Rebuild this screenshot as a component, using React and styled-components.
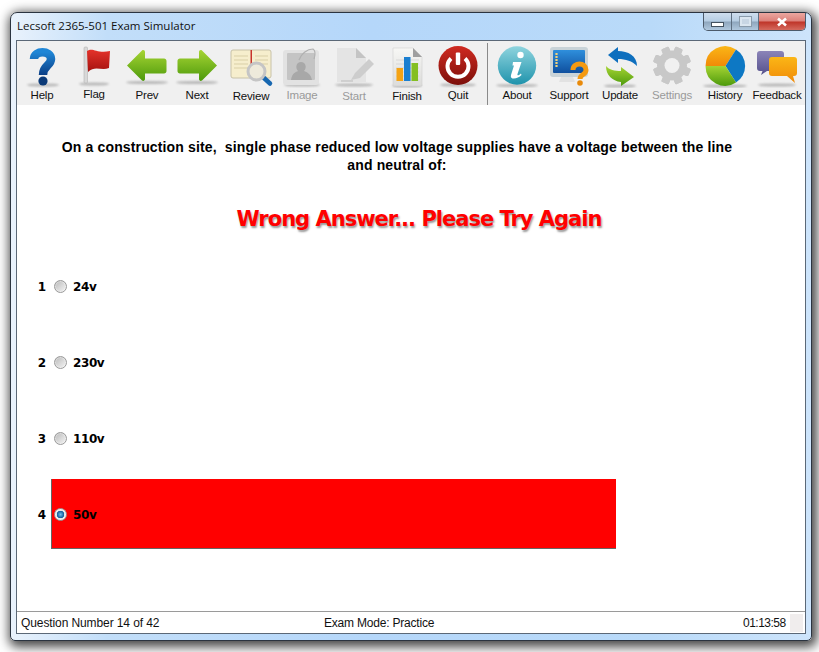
import React from 'react'
import styled, { createGlobalStyle } from 'styled-components'

const Global = createGlobalStyle`
  html, body { margin: 0; padding: 0; background: #fff; }
  body { width: 819px; height: 652px; overflow: hidden; }
`

const UI = `"Liberation Sans", Arial, sans-serif`

function Shadow({ cx = 25, cy = 41, rx = 17 }) {
  return <ellipse cx={cx} cy={cy} rx={rx} ry={1.6} fill="#8a8a8a" opacity="0.55" filter="url(#soft)" />
}

function Defs() {
  return (
    <HiddenSvg>
      <defs>
        <filter id="soft" x="-30%" y="-200%" width="160%" height="500%"><feGaussianBlur stdDeviation="0.9" /></filter>
        <linearGradient id="blue" x1="0" y1="0" x2="0" y2="1"><stop offset="0" stopColor="#1f86d6" /><stop offset="1" stopColor="#0b3f86" /></linearGradient>
        <linearGradient id="green" x1="0" y1="0" x2="0" y2="1"><stop offset="0" stopColor="#a6d433" /><stop offset="1" stopColor="#4d9a0c" /></linearGradient>
        <linearGradient id="red" x1="0" y1="0" x2="0" y2="1"><stop offset="0" stopColor="#e4322a" /><stop offset="1" stopColor="#a5120f" /></linearGradient>
        <linearGradient id="darkred" x1="0" y1="0" x2="0" y2="1"><stop offset="0" stopColor="#cf2a20" /><stop offset="1" stopColor="#7c0f0a" /></linearGradient>
        <linearGradient id="teal" x1="0" y1="0" x2="0" y2="1"><stop offset="0" stopColor="#8fd4de" /><stop offset="1" stopColor="#1f93ac" /></linearGradient>
        <linearGradient id="screen" x1="0" y1="0" x2="0" y2="1"><stop offset="0" stopColor="#2f8fdc" /><stop offset="1" stopColor="#0f4f9e" /></linearGradient>
        <linearGradient id="orange" x1="0" y1="0" x2="0" y2="1"><stop offset="0" stopColor="#fbb616" /><stop offset="1" stopColor="#f08a08" /></linearGradient>
        <linearGradient id="purple" x1="0" y1="0" x2="0" y2="1"><stop offset="0" stopColor="#8b84b8" /><stop offset="1" stopColor="#54508c" /></linearGradient>
        <linearGradient id="page" x1="0" y1="0" x2="0" y2="1"><stop offset="0" stopColor="#f7f7f5" /><stop offset="1" stopColor="#dcdcda" /></linearGradient>
      </defs>
    </HiddenSvg>
  )
}

const icons = {
  help: (
    <>
      <Shadow cx={26} rx={16} />
      <path d="M17 15C17 6 34 6 34 15C34 22 26 21 26 31" fill="none" stroke="url(#blue)" strokeWidth="8.5" strokeLinecap="butt" />
      <circle cx="26" cy="37" r="4.6" fill="#0b3a78" />
    </>
  ),
  flag: (
    <>
      <Shadow cx={25} rx={15} cy={40} />
      <rect x="15" y="3" width="3.5" height="36" rx="1" fill="#d8d8d8" stroke="#aaa" strokeWidth="0.5" />
      <path d="M18 7C24 3 28 10 41 7L40 24C32 27 26 21 19 28Z" fill="url(#red)" />
    </>
  ),
  prev: (
    <>
      <Shadow cy={38.5} rx={21} />
      <path d="M5 21.5L20 6.5C21.5 5.5 23 6.5 23 8V14.5H42C43.5 14.5 44.5 15.5 44.5 17V27C44.5 28.5 43.5 29.5 42 29.5H23V35C23 36.5 21.5 37.5 20 36.5Z" fill="url(#green)" />
    </>
  ),
  next: (
    <>
      <Shadow cy={38.5} rx={21} />
      <path d="M45 21.5L30 6.5C28.5 5.5 27 6.5 27 8V14.5H8C6.5 14.5 5.5 15.5 5.5 17V27C5.5 28.5 6.5 29.5 8 29.5H27V35C27 36.5 28.5 37.5 30 36.5Z" fill="url(#green)" />
    </>
  ),
  review: (
    <>
      <rect x="5" y="6" width="40" height="28" rx="2" fill="#f6eecd" stroke="#c8c2a8" />
      <path d="M8 12H22M8 16H22M8 20H22M8 24H22M29 12H42M29 16H42M29 20H42" stroke="#d9cfa6" strokeWidth="1" />
      <rect x="24.5" y="6" width="1.5" height="16" fill="#c8342c" />
      <line x1="38" y1="34" x2="44" y2="39.5" stroke="#1767b0" strokeWidth="4.5" strokeLinecap="round" />
      <circle cx="30.5" cy="27.5" r="8.5" fill="#eeeadb" stroke="#c5c5c5" strokeWidth="3" />
    </>
  ),
  image: (
    <>
      <Shadow rx={18} cy={41} />
      <rect x="6" y="6" width="36" height="35" rx="3" fill="#e2e2e2" />
      <rect x="10" y="9" width="28" height="27" rx="1" fill="#c4c4c4" />
      <path d="M14 36C15 29 19 28 21 27C18 24 19 18 24 18C29 18 30 24 27 27C30 28 34 30 35 36Z" fill="#a8a8a8" />
      <path d="M22 16C24 10 30 5 36 5C39 7 38 12 37 15" stroke="#b0b0b0" strokeWidth="1.2" fill="none" />
    </>
  ),
  start: (
    <>
      <Shadow rx={19} cy={41} />
      <path d="M8 4H27L37 14V38H8Z" fill="#e4e4e4" />
      <path d="M27 4V14H37Z" fill="#c4c4c4" />
      <path d="M22 36L26 29L40 15L45 20L31 34Z" fill="#cdcdcd" />
      <path d="M12 37H24" stroke="#bbb" strokeWidth="1" />
    </>
  ),
  finish: (
    <>
      <Shadow rx={15} cy={42} />
      <path d="M11 4H31L40 13V42H11Z" fill="url(#page)" stroke="#c8c8c8" strokeWidth="0.5" />
      <path d="M31 4V13H40Z" fill="#9f9f9f" />
      <path d="M14 16H37M14 20H37M14 24H37M14 28H37M14 32H37M14 36H37" stroke="#cfcfcf" strokeWidth="0.7" />
      <rect x="14.5" y="24" width="6.5" height="13" fill="#f5a313" />
      <rect x="22" y="13" width="6.5" height="24" fill="#1b7fd0" />
      <rect x="29.5" y="19" width="6.5" height="18" fill="#84bf22" />
    </>
  ),
  quit: (
    <>
      <Shadow rx={18} cy={41} />
      <circle cx="25" cy="21.5" r="19.5" fill="url(#darkred)" />
      <path d="M18 14.5A10.5 10.5 0 1 0 32 14.5" fill="none" stroke="#fff" strokeWidth="4" />
      <rect x="22.8" y="8.5" width="4.4" height="12.5" rx="1" fill="#fff" />
    </>
  ),
  about: (
    <>
      <Shadow rx={21} cy={41.5} />
      <circle cx="25" cy="21.5" r="19.2" fill="url(#teal)" />
      <circle cx="28.5" cy="11" r="3.2" fill="#fff" />
      <path d="M21 18H29.5L25.5 30C25 32 27 31.5 29 29.5L29.5 31C26 35 17.5 36.5 19 31L22 21.5H20.5Z" fill="#fff" />
    </>
  ),
  support: (
    <>
      <rect x="6" y="3" width="38" height="30" rx="3" fill="#c9d3d8" />
      <rect x="9" y="6" width="32" height="23" rx="1" fill="url(#screen)" />
      <path d="M12.5 9V24" stroke="#f2d27a" strokeWidth="2.2" strokeDasharray="2 1" />
      <path d="M17 33H29L31 38H15Z" fill="#e2e2e2" />
      <path d="M29 26C29 18 42 18 42 26C42 31 36 30 36 35" fill="none" stroke="#f49a12" strokeWidth="5" />
      <circle cx="36" cy="39" r="2.8" fill="#e98a0a" />
    </>
  ),
  update: (
    <>
      <Shadow rx={16} cy={42} />
      <path d="M13 11L23 3V7C33 7 42 12 42 22C37 17 31 15 23 15V19Z" fill="#0e6fbe" />
      <path d="M39 33L26 23V27C20 27 14 26 11 22C11 31 17 37 26 38V42Z" fill="url(#green)" />
    </>
  ),
  settings: (
    <>
      <g fill="#c8c8c8">
        {[0, 45, 90, 135, 180, 225, 270, 315].map((a) => (
          <rect key={a} x="21" y="2.5" width="8" height="38" rx="1.5" transform={`rotate(${a + 22.5} 25 21.5)`} />
        ))}
      </g>
      <circle cx="25" cy="21.5" r="15" fill="#c8c8c8" />
      <circle cx="25" cy="21.5" r="7.5" fill="#f0f0f0" />
    </>
  ),
  history: (
    <>
      <Shadow rx={22} cy={42} />
      <path d="M25.5 22L5.6 22A19.5 19.5 0 0 1 36 5.5Z" fill="url(#orange)" />
      <path d="M25.5 22L36 5.5A19.5 19.5 0 0 1 36 38.5Z" fill="#0d78c4" />
      <path d="M25.5 22L36 38.5A19.5 19.5 0 0 1 5.6 22Z" fill="url(#green)" />
    </>
  ),
  feedback: (
    <>
      <Shadow rx={19} cy={41} />
      <path d="M8 7H29C31 7 32 8 32 10V24C32 26 31 27 29 27H15L9 31L10.5 27H8C6 27 5 26 5 24V10C5 8 6 7 8 7Z" fill="url(#purple)" />
      <path d="M20 13H42C44 13 45 14 45 16V29C45 31 44 32 42 32H41L43 39L35 32H20C18 32 17 31 17 29V16C17 14 18 13 20 13Z" fill="url(#orange)" />
    </>
  ),
}

const leftTools = [
  { id: 'help', label: 'Help', w: 50 },
  { id: 'flag', label: 'Flag', w: 54, drop: -1 },
  { id: 'prev', label: 'Prev', w: 52 },
  { id: 'next', label: 'Next', w: 48 },
  { id: 'review', label: 'Review', w: 60, drop: 1 },
  { id: 'image', label: 'Image', w: 42, off: true },
  { id: 'start', label: 'Start', w: 62, off: true, drop: 1 },
  { id: 'finish', label: 'Finish', w: 44, drop: 1 },
  { id: 'quit', label: 'Quit', w: 58 },
]

const rightTools = [
  { id: 'about', label: 'About', w: 58 },
  { id: 'support', label: 'Support', w: 46 },
  { id: 'update', label: 'Update', w: 56 },
  { id: 'settings', label: 'Settings', w: 48, off: true },
  { id: 'history', label: 'History', w: 58 },
  { id: 'feedback', label: 'Feedback', w: 46 },
]

const answers = [
  { n: 1, text: '24v' },
  { n: 2, text: '230v' },
  { n: 3, text: '110v' },
  { n: 4, text: '50v', wrong: true },
]

function Tool({ tool }) {
  return (
    <ToolButton $w={tool.w}>
      <ToolIcon viewBox="0 0 50 44">{icons[tool.id]}</ToolIcon>
      <ToolLabel $off={tool.off} $drop={tool.drop || 0}>{tool.label}</ToolLabel>
    </ToolButton>
  )
}

export default function App() {
  return (
    <>
      <Global />
      <Defs />
      <Window>
        <TitleBar>
          <Title>Lecsoft 2365-501 Exam Simulator</Title>
          <Caption>
            <MinButton><MinGlyph /></MinButton>
            <MaxButton><MaxGlyph /></MaxButton>
            <CloseButton>
              <svg width="14" height="10" viewBox="0 0 14 10">
                <path d="M3 1.5L11 8.5M11 1.5L3 8.5" stroke="#fff" strokeWidth="2.6" />
              </svg>
            </CloseButton>
          </Caption>
        </TitleBar>
        <Client>
          <Toolbar>
            {leftTools.map((t) => <Tool key={t.id} tool={t} />)}
            <ToolSeparator />
            {rightTools.map((t) => <Tool key={t.id} tool={t} />)}
          </Toolbar>
          <Main>
            <Question>
              On a construction site,&nbsp; single phase reduced low voltage supplies have a voltage between the line<br />
              and neutral of:
            </Question>
            <Verdict>Wrong Answer... Please Try Again</Verdict>
            <Answers>
              {answers.map((a) => (
                <AnswerRow key={a.n}>
                  <AnswerNumber>{a.n}</AnswerNumber>
                  <AnswerBox $wrong={a.wrong}>
                    <Radio $checked={a.wrong} />
                    <AnswerText>{a.text}</AnswerText>
                  </AnswerBox>
                </AnswerRow>
              ))}
            </Answers>
          </Main>
          <StatusBar>
            <StatusLeft>Question Number 14 of 42</StatusLeft>
            <StatusMiddle>Exam Mode: Practice</StatusMiddle>
            <StatusRight>01:13:58</StatusRight>
            <Grip />
          </StatusBar>
        </Client>
      </Window>
    </>
  )
}

const HiddenSvg = styled.svg`
  position: absolute;
  width: 0;
  height: 0;
`

const Window = styled.div`
  box-sizing: border-box;
  width: 802px;
  height: 629px;
  margin: 12px 0 0 10px;
  display: flex;
  flex-direction: column;
  border: 1px solid #2b3440;
  border-radius: 7px 7px 5px 5px;
  background: linear-gradient(90deg, #e9f2fc 0, #c2def9 12%, #b5d7fa 45%, #b9daf9 80%, #cde4fb 100%);
  box-shadow: 2px 3px 11px 3px rgba(0, 0, 0, 0.72);
`

const TitleBar = styled.div`
  height: 27px;
  display: flex;
  justify-content: space-between;
  padding: 0 5px 0 6px;
  flex-shrink: 0;
`

const Title = styled.div`
  font: 11.5px "Open Sans", sans-serif;
  line-height: 26px;
  color: #111;
  white-space: nowrap;
`

const Caption = styled.div`
  display: flex;
  height: 17px;
  border: 1px solid #4c5a6a;
  border-top: none;
  border-radius: 0 0 5px 5px;
  overflow: hidden;
`

const CaptionButton = styled.div`
  height: 17px;
  display: flex;
  align-items: center;
  justify-content: center;
  border-right: 1px solid #5d6e80;
  background: linear-gradient(180deg, #cfdeee 0, #b6cde3 48%, #8ea6bd 52%, #b0c8de 100%);
`

const MinButton = styled(CaptionButton)`
  width: 27px;
`

const MaxButton = styled(CaptionButton)`
  width: 26px;
`

const CloseButton = styled(CaptionButton)`
  width: 46px;
  border-right: none;
  background: linear-gradient(180deg, #eba7a0 0, #dc8079 48%, #bf3428 52%, #d46a5e 100%);
`

const MinGlyph = styled.div`
  width: 11px;
  height: 3px;
  margin-top: 6px;
  background: #fff;
  border: 1px solid #44525f;
`

const MaxGlyph = styled.div`
  box-sizing: border-box;
  width: 11px;
  height: 9px;
  background: #c8d6e4;
  border: 2px solid #dbe6f0;
  outline: 1px solid #8a9bab;
`

const Client = styled.div`
  flex: 1;
  display: flex;
  flex-direction: column;
  min-height: 0;
  margin: 0 5px 6px 5px;
  border: 1px solid #5b6877;
  background: #fff;
`

const Toolbar = styled.div`
  height: 64px;
  flex-shrink: 0;
  display: flex;
  background: #f0f0f0;
`

const ToolButton = styled.div`
  width: ${(p) => p.$w}px;
  display: flex;
  flex-direction: column;
  align-items: center;
  padding-top: 3px;
`

const ToolIcon = styled.svg`
  width: 50px;
  height: 44px;
  flex-shrink: 0;
`

const ToolLabel = styled.div`
  font: 11.5px ${UI};
  line-height: 14px;
  margin-top: ${(p) => p.$drop}px;
  color: ${(p) => (p.$off ? '#9a9a9a' : '#111')};
  white-space: nowrap;
  letter-spacing: -0.2px;
`

const ToolSeparator = styled.div`
  width: 1px;
  height: 62px;
  margin-top: 2px;
  background: #8a8a8a;
`

const Main = styled.div`
  flex: 1;
  display: flex;
  flex-direction: column;
  min-height: 0;
`

const Question = styled.div`
  width: 700px;
  margin: 33px 0 0 30px;
  font: bold 14px/18px ${UI};
  letter-spacing: 0.14px;
  color: #000;
  text-align: center;
`

const Verdict = styled.div`
  width: 400px;
  margin: 27px 0 0 202px;
  height: 36px;
  font: bold 21px/36px "DejaVu Sans", sans-serif;
  color: #f00;
  text-align: center;
  white-space: nowrap;
  text-shadow: 1px 2px 2px #999;
  letter-spacing: -1px;
`

const Answers = styled.div`
  margin-top: 14px;
  display: flex;
  flex-direction: column;
  gap: 6px;
`

const AnswerRow = styled.div`
  display: flex;
  align-items: center;
  height: 70px;
`

const AnswerNumber = styled.div`
  width: 29px;
  padding: 2px 5px 0 0;
  text-align: right;
  font: bold 12px "DejaVu Sans", sans-serif;
  color: #000;
`

const AnswerBox = styled.div`
  box-sizing: border-box;
  width: 565px;
  height: 70px;
  display: flex;
  align-items: center;
  gap: 6px;
  padding: 2px 0 0 2px;
  background: ${(p) => (p.$wrong ? '#f00' : 'transparent')};
  border-left: 1px solid ${(p) => (p.$wrong ? '#666' : 'transparent')};
  border-bottom: 1px solid ${(p) => (p.$wrong ? '#666' : 'transparent')};
`

const Radio = styled.div`
  box-sizing: border-box;
  width: 13px;
  height: 13px;
  border-radius: 50%;
  border: 1px solid #9a9a9a;
  background: ${(p) =>
    p.$checked
      ? 'radial-gradient(circle, #6fc0ec 0, #0f5c9c 3.5px, #e6e6e6 4px, #f4f4f4 100%)'
      : 'linear-gradient(135deg, #b8b8b8 0, #dedede 60%, #f4f4f4 100%)'};
  box-shadow: inset 0 0 0 1px rgba(255, 255, 255, 0.35);
`

const AnswerText = styled.div`
  font: bold 12px "DejaVu Sans", sans-serif;
  letter-spacing: -0.4px;
  color: #000;
`

const StatusBar = styled.div`
  height: 21px;
  flex-shrink: 0;
  display: flex;
  align-items: center;
  border-top: 1px solid #9a9a9a;
  font: 12px ${UI};
  color: #111;
`

const StatusLeft = styled.div`
  width: 307px;
  padding-left: 4px;
  box-sizing: border-box;
  letter-spacing: -0.1px;
`

const StatusMiddle = styled.div`
  width: 419px;
  letter-spacing: -0.2px;
`

const StatusRight = styled.div`
  width: 44px;
  letter-spacing: -0.5px;
`

const Grip = styled.div`
  width: 13px;
  height: 18px;
  margin-left: 3px;
  background: #f0eded;
`
